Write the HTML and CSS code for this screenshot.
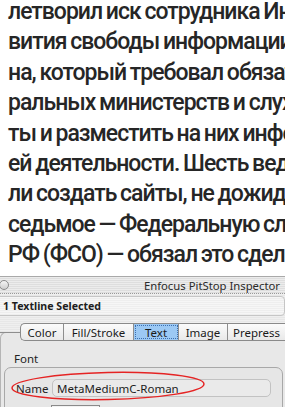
FILE: index.html
```html
<!DOCTYPE html>
<html lang="ru">
<head>
    <meta charset="UTF-8">
    <meta name="viewport" content="width=device-width, initial-scale=1.0">
    <title>PitStop Inspector</title>
    <link rel="stylesheet" href="styles.css">
</head>
<body>
    <div class="article">
        <p>летворил иск сотрудника Института развития</p>
        <p>вития свободы информации Ивана Павлова</p>
        <p>на, который требовал обязать руководства</p>
        <p>ральных министерств и служб создать сай-</p>
        <p>ты и разместить на них информацию о сво-</p>
        <p>ей деятельности. Шесть ведомств успе-</p>
        <p>ли создать сайты, не дожидаясь решения суда,</p>
        <p>седьмое — Федеральную службу охраны</p>
        <p>РФ (ФСО) — обязал это сделать суд.</p>
    </div>

    <div class="inspector">
        <div class="titlebar">
            <span class="close-btn"></span>
            <span class="title">Enfocus PitStop Inspector</span>
        </div>

        <div class="selection">1 Textline Selected</div>

        <div class="tabs">
            <span class="tab-line"></span>
            <div class="tab-group">
                <span class="tab tab-color">Color</span>
                <span class="tab tab-fill">Fill/Stroke</span>
                <span class="tab tab-text active">Text</span>
                <span class="tab tab-image">Image</span>
                <span class="tab tab-prepress">Prepress</span>
            </div>
        </div>

        <div class="panel">
            <div class="group-label">Font</div>
            <div class="group">
                <div class="field-row">
                    <label class="field-label">Name</label>
                    <div class="field">MetaMediumC-Roman</div>
                </div>
                <div class="field-row">
                    <div class="small-field"></div>
                </div>
            </div>

            <!-- red marker round the font name -->
            <svg class="marker" width="200" height="32" viewBox="0 0 200 32">
                <ellipse cx="99" cy="16" rx="96" ry="13.5" fill="none" stroke="#e52424" stroke-width="1.5" transform="rotate(-1.2 99 16)"/>
            </svg>
        </div>
    </div>
</body>
</html>
```

FILE: styles.css
```css
body {
    margin: 0;
    background-color: #ffffff;
    overflow: hidden;
}
.article {
    height: 276px;
    overflow: hidden;
    padding-left: 8px;
    font-family: Roboto, sans-serif;
    font-weight: 500;
    font-size: 23px;
    line-height: 30.4px;
    letter-spacing: -1px;
    word-spacing: -1px;
    color: #262626;
}
.article p {
    margin: 0;
    white-space: nowrap;
}
.article p:first-child {
    margin-top: -3px;
}

.inspector {
    font-family: "Noto Sans", "DejaVu Sans", sans-serif;
    font-size: 11.5px;
    color: #222;
    background: repeating-linear-gradient(#efefef 0 1px, #e7e7e7 1px 2px);
    height: 131px;
}
.titlebar {
    height: 16px;
    border-top: 1px solid #a9a9a9;
    border-bottom: 1px dotted #9a9a9a;
    display: flex;
    align-items: center;
    justify-content: space-between;
    background: repeating-linear-gradient(#ececec 0 1px, #dedede 1px 2px);
}
.close-btn {
    width: 10px;
    height: 10px;
    margin-left: -1px;
    border: 1px solid #8a8a8a;
    border-radius: 50%;
    background: linear-gradient(#f4f4f4, #cfcfcf);
    box-sizing: border-box;
}
.title {
    padding-right: 5px;
    font-size: 11.3px;
    color: #2a2a2a;
}

.selection {
    margin: 2px 0 0 -4px;
    height: 18px;
    padding-left: 6px;
    border: 1px solid #c6c6c6;
    border-radius: 4px;
    display: flex;
    align-items: center;
    font-weight: bold;
    font-size: 10.6px;
    color: #1e1e1e;
    background: repeating-linear-gradient(#f6f6f6 0 1px, #eeeeee 1px 2px);
}

.tabs {
    margin-top: 7px;
    height: 18px;
    display: flex;
    align-items: center;
    position: relative;
    z-index: 1;
}
.tab-line {
    width: 20px;
    height: 1px;
    background: #8e8e8e;
}
.tab-group {
    display: flex;
    height: 16px;
    border: 1px solid #8a8a8a;
    border-right: none;
    border-radius: 5px 0 0 5px;
    background: linear-gradient(#fbfbfb, #e9e9e9);
    flex: 1;
}
.tab {
    display: flex;
    align-items: center;
    justify-content: center;
    border-right: 1px solid #8e8e8e;
    font-size: 11.5px;
    color: #1a1a1a;
}
.tab-color { width: 42px; }
.tab-fill { width: 69px; }
.tab-text { width: 44px; }
.tab-image { width: 48px; }
.tab-prepress { flex: 1; border-right: none; }
.tab.active {
    background: #9cc9f4;
    outline: 1px dotted #3b6fb0;
    outline-offset: -2px;
}

.panel {
    position: relative;
    margin-top: -9px;
    height: 84px;
    border-left: 1px solid #b5b5b5;
    border-top: 1px solid #b5b5b5;
    border-top-left-radius: 6px;
    background: #e8e8e8;
    padding-top: 16px;
    box-sizing: border-box;
}
.group-label {
    padding-left: 13px;
    height: 18px;
    line-height: 20px;
    font-size: 11.5px;
}
.group {
    margin: 0 2px 0 3px;
    border: 1px solid #a8a8a8;
    border-radius: 7px;
    padding: 11px 0 0 11px;
    height: 60px;
    box-sizing: border-box;
    background: #e6e6e6;
}
.field-row {
    display: flex;
    align-items: center;
}
.field-label {
    width: 36px;
    font-size: 11.5px;
}
.field {
    width: 219px;
    height: 18px;
    padding-left: 4px;
    box-sizing: border-box;
    border: 1px solid #c2c2c2;
    border-radius: 5px;
    background: #eaeaea;
    display: flex;
    align-items: center;
    font-size: 11.5px;
    color: #1c1c1c;
}
.small-field {
    margin: 8px 0 0 35px;
    width: 47px;
    height: 8px;
    border: 1px solid #8a8a8a;
    border-bottom: none;
    background: #f2f2f2;
}
.marker {
    position: absolute;
    left: 8px;
    top: 37px;
}
```
